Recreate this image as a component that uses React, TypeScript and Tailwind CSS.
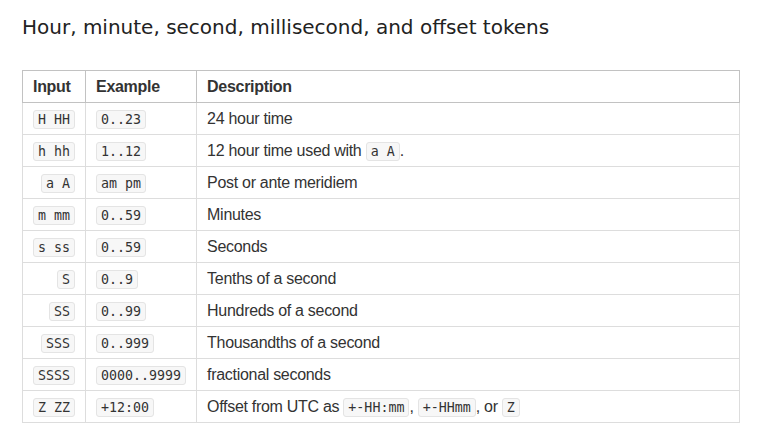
const rows: { input: string; example: string; desc: React.ReactNode }[] = [
  { input: 'H HH', example: '0..23', desc: '24 hour time' },
  {
    input: 'h hh',
    example: '1..12',
    desc: (
      <>
        12 hour time used with <Code>a A</Code>.
      </>
    ),
  },
  { input: 'a A', example: 'am pm', desc: 'Post or ante meridiem' },
  { input: 'm mm', example: '0..59', desc: 'Minutes' },
  { input: 's ss', example: '0..59', desc: 'Seconds' },
  { input: 'S', example: '0..9', desc: 'Tenths of a second' },
  { input: 'SS', example: '0..99', desc: 'Hundreds of a second' },
  { input: 'SSS', example: '0..999', desc: 'Thousandths of a second' },
  { input: 'SSSS', example: '0000..9999', desc: 'fractional seconds' },
  {
    input: 'Z ZZ',
    example: '+12:00',
    desc: (
      <>
        Offset from UTC as <Code>+-HH:mm</Code>, <Code>+-HHmm</Code>, or <Code>Z</Code>
      </>
    ),
  },
];

function Code({ children }: { children: React.ReactNode }) {
  return (
    <code className="inline-block rounded-[3px] border border-[#e4e4e4] bg-[#f7f7f7] px-[4px] text-[13.3px] leading-[17px] tracking-normal text-[#333] [font-family:'DejaVu_Sans_Mono',monospace] whitespace-pre">
      {children}
    </code>
  );
}

export default function App() {
  return (
    <div className="min-h-screen bg-white pl-[22px] pt-[14px] [font-family:'Liberation_Sans',Arial,sans-serif] text-[#333]">
      <h2 className="text-[20px] leading-[26px] text-[#222] [font-family:'DejaVu_Sans',sans-serif]">
        Hour, minute, second, millisecond, and offset tokens
      </h2>
      <table className="mt-[30px] w-[718px] border-collapse text-[16px] tracking-[-0.3px]">
        <thead>
          <tr className="h-[32px]">
            <th className="w-[63px] border border-[#c2c2c2] px-[10px] text-left font-bold">Input</th>
            <th className="w-[111px] border border-[#c2c2c2] px-[10px] text-left font-bold">Example</th>
            <th className="border border-[#c2c2c2] px-[10px] text-left font-bold">Description</th>
          </tr>
        </thead>
        <tbody>
          {rows.map((r, i) => (
            <tr key={i} className="h-[32px]">
              <td className="border border-[#dddddd] border-t-0 px-[10px] text-right">
                <Code>{r.input}</Code>
              </td>
              <td className="border border-[#dddddd] border-t-0 px-[10px]">
                <Code>{r.example}</Code>
              </td>
              <td className="border border-[#dddddd] border-t-0 px-[10px]">{r.desc}</td>
            </tr>
          ))}
        </tbody>
      </table>
    </div>
  );
}
